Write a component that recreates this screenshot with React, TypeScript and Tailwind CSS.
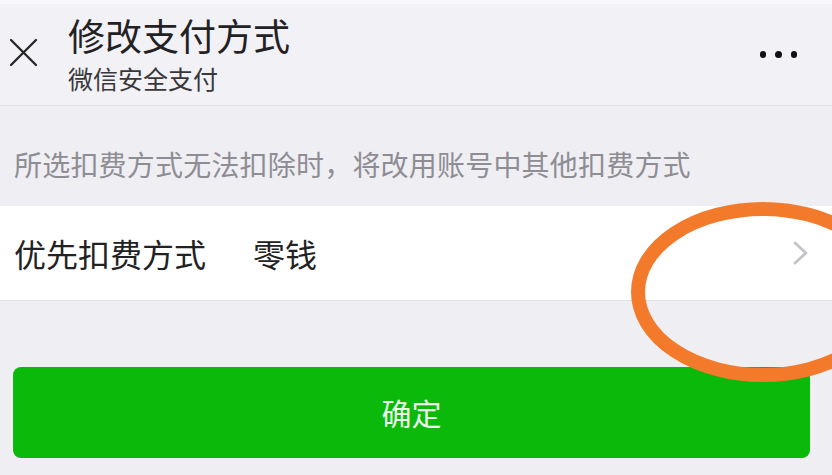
export default function App() {
  return (
    <div className="relative w-[832px] h-[475px] overflow-hidden bg-[#efeef3] font-['Noto_Sans_CJK_SC','Noto_Sans',sans-serif]">
      {/* status strip */}
      <div className="h-[4px] bg-[#f8f8fa]" />

      {/* Header */}
      <header className="h-[102px] bg-[#f2f1f5] border-b border-[#e2e1e6] flex items-start">
        <div className="w-[68px] pt-[34px] pl-[9px]">
          <svg width="29" height="29" viewBox="0 0 29 29" fill="none">
            <path d="M2 2L27 27M27 2L2 27" stroke="#262626" strokeWidth="2.3" strokeLinecap="round" />
          </svg>
        </div>
        <div className="flex-1 pt-[11px]">
          <div className="text-[37px] leading-[40px] text-[#222224]">修改支付方式</div>
          <div className="mt-[8px] text-[25px] leading-[30px] text-[#38383a]">微信安全支付</div>
        </div>
        <div className="flex gap-[9px] pt-[47px] pr-[35px]">
          <span className="w-[6.5px] h-[6.5px] rounded-full bg-[#111]" />
          <span className="w-[6.5px] h-[6.5px] rounded-full bg-[#111]" />
          <span className="w-[6.5px] h-[6.5px] rounded-full bg-[#111]" />
        </div>
      </header>

      {/* Hint */}
      <div className="h-[100px] pt-[38px] pl-[14px]">
        <p className="text-[28px] leading-[40px] tracking-[0.2px] text-[#8e8d93]">所选扣费方式无法扣除时，将改用账号中其他扣费方式</p>
      </div>

      {/* Preferred method row */}
      <div className="h-[95px] bg-white border-b border-[#e3e2e7] flex items-center pl-[14px] pr-[24px]">
        <span className="text-[32px] leading-none text-[#222224]">优先扣费方式</span>
        <span className="ml-[47px] text-[32px] leading-none text-[#222224]">零钱</span>
        <svg className="ml-auto" width="15" height="24" viewBox="0 0 15 24" fill="none">
          <path d="M2 2L13 12L2 22" stroke="#c4c4c8" strokeWidth="2.8" strokeLinecap="round" strokeLinejoin="round" />
        </svg>
      </div>

      {/* Confirm button */}
      <div className="pt-[66px] pl-[13px] pr-[22px]">
        <button className="w-full h-[91px] rounded-[8px] bg-[#0ab90a] text-[30px] text-[#ecfbea] flex items-center justify-center">
          确定
        </button>
      </div>

      {/* Annotation circle */}
      <svg className="absolute inset-0 pointer-events-none" width="832" height="475" viewBox="0 0 832 475">
        <ellipse cx="763" cy="292" rx="125" ry="83" fill="none" stroke="#f47a2b" strokeWidth="14" />
      </svg>
    </div>
  );
}
